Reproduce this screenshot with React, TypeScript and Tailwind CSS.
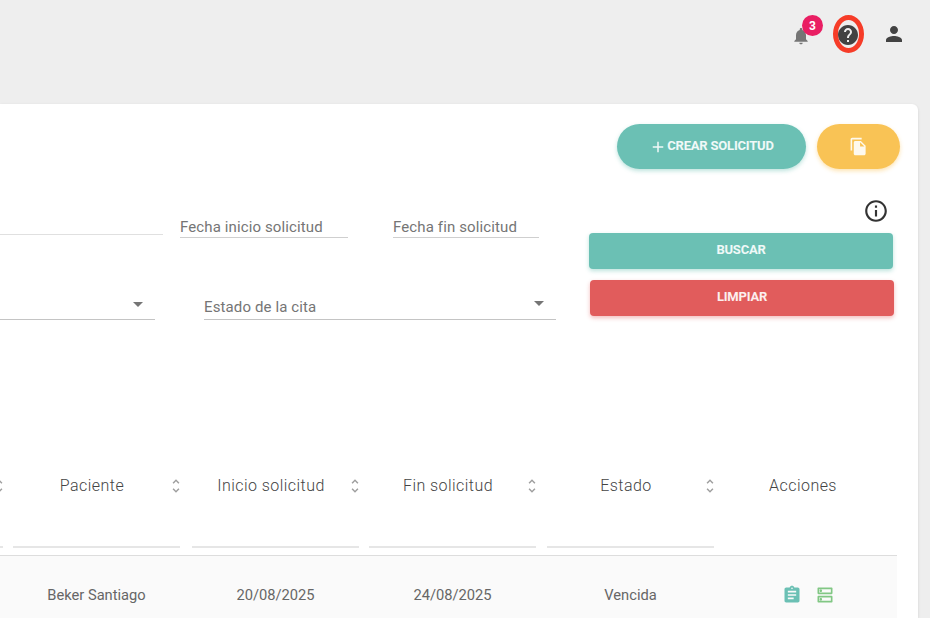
const ICONS = {
  bell: "M12 22c1.1 0 2-.9 2-2h-4c0 1.1.89 2 2 2zm6-6v-5c0-3.07-1.64-5.64-4.5-6.32V4c0-.83-.67-1.5-1.5-1.5s-1.5.67-1.5 1.5v.68C7.63 5.36 6 7.92 6 11v5l-2 2v1h16v-1l-2-2z",
  help: "M12 2C6.48 2 2 6.48 2 12s4.48 10 10 10 10-4.48 10-10S17.52 2 12 2zm1 17h-2v-2h2v2zm2.07-7.75l-.9.92C13.45 12.9 13 13.5 13 15h-2v-.5c0-1.1.45-2.1 1.17-2.83l1.24-1.26c.37-.36.59-.86.59-1.41 0-1.1-.9-2-2-2s-2 .9-2 2H8c0-2.21 1.79-4 4-4s4 1.79 4 4c0 .88-.36 1.68-.93 2.25z",
  person: "M12 12c2.21 0 4-1.79 4-4s-1.79-4-4-4-4 1.79-4 4 1.79 4 4 4zm0 2c-2.67 0-8 1.34-8 4v2h16v-2c0-2.66-5.33-4-8-4z",
  copy: "M16 1H4c-1.1 0-2 .9-2 2v14h2V3h12V1zm-1 4l6 6v10c0 1.1-.9 2-2 2H7.99C6.89 23 6 22.1 6 21l.01-14c0-1.1.89-2 1.99-2h7zm-1 7h5.5L14 6.5V12z",
  plus: "M19 13h-6v6h-2v-6H5v-2h6V5h2v6h6v2z",
  info: "M11 7h2v2h-2zm0 4h2v6h-2zm1-9C6.48 2 2 6.48 2 12s4.48 10 10 10 10-4.48 10-10S17.52 2 12 2zm0 18c-4.41 0-8-3.59-8-8s3.59-8 8-8 8 3.59 8 8-3.59 8-8 8z",
  sort: "M12 5.83L15.17 9l1.41-1.41L12 3 7.41 7.59 8.83 9 12 5.83zm0 12.34L8.83 15l-1.41 1.41L12 21l4.59-4.59L15.17 15 12 18.17z",
  assignment: "M19 3h-4.18C14.4 1.84 13.3 1 12 1c-1.3 0-2.4.84-2.82 2H5c-1.1 0-2 .9-2 2v14c0 1.1.9 2 2 2h14c1.1 0 2-.9 2-2V5c0-1.1-.9-2-2-2zm-7 0c.55 0 1 .45 1 1s-.45 1-1 1-1-.45-1-1 .45-1 1-1zm2 14H7v-2h7v2zm3-4H7v-2h10v2zm0-4H7V7h10v2z",
  storage: "M19 15v4H5v-4h14m1-2H4c-.55 0-1 .45-1 1v6c0 .55.45 1 1 1h16c.55 0 1-.45 1-1v-6c0-.55-.45-1-1-1zM7 18.5c-.82 0-1.5-.67-1.5-1.5s.68-1.5 1.5-1.5 1.5.67 1.5 1.5-.67 1.5-1.5 1.5zM19 5v4H5V5h14m1-2H4c-.55 0-1 .45-1 1v6c0 .55.45 1 1 1h16c.55 0 1-.45 1-1V4c0-.55-.45-1-1-1zM7 8.5c-.82 0-1.5-.67-1.5-1.5S6.18 5.5 7 5.5s1.5.68 1.5 1.5S7.83 8.5 7 8.5z",
};

function Icon({ d, className }: { d: string; className?: string }) {
  return (
    <svg viewBox="0 0 24 24" fill="currentColor" className={className}>
      <path d={d} />
    </svg>
  );
}

function Caret({ className }: { className?: string }) {
  return <div className={`w-0 h-0 border-x-[5px] border-x-transparent border-t-[5px] border-t-[#757575] ${className ?? ""}`} />;
}

function TopBar() {
  return (
    <div className="flex justify-end h-[104px] pt-[23px] pr-[24px]">
      <div className="relative w-[24px] h-[24px]">
        <Icon d={ICONS.bell} className="w-[20px] h-[20px] ml-[2px] mt-[3px] text-[#757575]" />
        <span className="absolute left-[13px] -top-[8px] w-[21px] h-[21px] rounded-full bg-[#e91e63] text-white text-[12px] font-bold flex items-center justify-center">
          3
        </span>
      </div>
      <div className="relative w-[24px] h-[24px] ml-[23px]">
        <Icon d={ICONS.help} className="w-[24px] h-[24px] text-[#424242]" />
        <div className="absolute -left-[3px] -top-[8px] w-[31px] h-[38px] rounded-[50%] border-[5px] border-[#f63c28]" />
      </div>
      <Icon d={ICONS.person} className="w-[24px] h-[24px] ml-[22px] -mt-[1px] text-[#424242]" />
    </div>
  );
}

function FilterBlock() {
  return (
    <div className="flex mt-[30px]">
      <div className="w-[556px] shrink-0 text-[15px] tracking-[0.12px] text-[#757575]">
        <div className="flex items-start h-[40px]">
          <div className="w-[163px] h-[36px] border-b border-[#e0e0e0]" />
          <div className="w-[168px] ml-[17px] mt-[18px] h-[21px] leading-[20px] border-b border-[#cfcfcf]">Fecha inicio solicitud</div>
          <div className="w-[146px] ml-[45px] mt-[18px] h-[21px] leading-[20px] border-b border-[#cfcfcf]">Fecha fin solicitud</div>
        </div>
        <div className="flex mt-[59px]">
          <div className="w-[155px] h-[22px] border-b border-[#c4c4c4] flex justify-end pr-[12px] pt-[4px]">
            <Caret />
          </div>
          <div className="w-[352px] ml-[49px] h-[22px] border-b border-[#c4c4c4] flex justify-between pr-[12px] leading-[18px]">
            <span>Estado de la cita</span>
            <Caret className="mt-[3px]" />
          </div>
        </div>
      </div>
      <div className="w-[305px] ml-[33px] shrink-0">
        <div className="flex justify-end pr-[5px] h-[34px]">
          <Icon d={ICONS.info} className="w-[26px] h-[26px] -mt-[1px] text-[#333333]" />
        </div>
        <button className="w-[304px] h-[36px] pb-[2px] rounded-[4px] bg-[#6bc0b4] text-white/90 text-[13px] font-bold tracking-[-0.2px] shadow-[0_2px_4px_rgba(108,193,180,0.45)]">
          BUSCAR
        </button>
        <button className="w-[304px] h-[36px] pb-[2px] ml-[1px] mt-[11px] block rounded-[4px] bg-[#e15c5c] text-white/90 text-[13px] font-bold tracking-[-0.2px] shadow-[0_2px_4px_rgba(225,91,91,0.4)]">
          LIMPIAR
        </button>
      </div>
    </div>
  );
}

function HeaderCell({ label, ml }: { label: string; ml: string }) {
  return (
    <div className={`w-[167px] shrink-0 flex items-center pl-[4px] ${ml}`}>
      <span className="flex-1 text-center">{label}</span>
      <Icon d={ICONS.sort} className="w-[18px] h-[18px] -mr-[5px] shrink-0 text-[#9e9e9e]" />
    </div>
  );
}

function FilterLine({ ml }: { ml: string }) {
  return <div className={`w-[167px] shrink-0 h-[46px] border-b-2 border-[#e6e6e6] ${ml}`} />;
}

function DataCell({ text, ml }: { text: string; ml: string }) {
  return <div className={`w-[167px] shrink-0 text-center ${ml}`}>{text}</div>;
}

function Table() {
  return (
    <div className="w-[897px] mt-[150px]">
      <div className="flex h-[32px] items-center text-[16px] font-light tracking-[0.45px] text-[#444444]">
        <div className="w-[3px] overflow-hidden flex justify-end">
          <Icon d={ICONS.sort} className="w-[18px] h-[18px] -mr-[5px] shrink-0 text-[#9e9e9e]" />
        </div>
        <HeaderCell label="Paciente" ml="ml-[10px]" />
        <HeaderCell label="Inicio solicitud" ml="ml-[12px]" />
        <HeaderCell label="Fin solicitud" ml="ml-[10px]" />
        <HeaderCell label="Estado" ml="ml-[11px]" />
        <div className="w-[156px] ml-[11px] text-center">Acciones</div>
      </div>
      <div className="flex border-b border-[#dddddd] pb-[7px]">
        <div className="w-[3px] h-[46px] border-b-2 border-[#e6e6e6]" />
        <FilterLine ml="ml-[10px]" />
        <FilterLine ml="ml-[12px]" />
        <FilterLine ml="ml-[10px]" />
        <FilterLine ml="ml-[11px]" />
      </div>
      <div className="flex items-center h-[78px] bg-[#fafafa] text-[14.7px] text-[#666666]">
        <div className="w-[3px]" />
        <DataCell text="Beker Santiago" ml="ml-[10px]" />
        <DataCell text="20/08/2025" ml="ml-[12px]" />
        <DataCell text="24/08/2025" ml="ml-[10px]" />
        <DataCell text="Vencida" ml="ml-[11px]" />
        <div className="flex ml-[68px]">
          <Icon d={ICONS.assignment} className="w-[20px] h-[20px] text-[#6bc0b4]" />
          <Icon d={ICONS.storage} className="w-[20px] h-[20px] ml-[13px] text-[#81c784]" />
        </div>
      </div>
    </div>
  );
}

export default function App() {
  return (
    <div className="w-[930px] h-[618px] overflow-hidden bg-[#eeeeee] font-['Roboto',sans-serif]">
      <TopBar />
      <div className="w-[918px] h-[514px] bg-white rounded-tr-[6px] shadow-[0_1px_3px_rgba(0,0,0,0.12)] overflow-hidden">
        <div className="flex justify-end gap-[11px] pt-[20px] pr-[18px]">
          <button className="w-[189px] h-[45px] pb-[2px] rounded-full bg-[#6bc0b4] text-white/90 text-[13px] font-bold tracking-[-0.2px] flex items-center justify-center shadow-[0_2px_4px_rgba(108,193,180,0.45)]">
            <Icon d={ICONS.plus} className="w-[18px] h-[18px] mt-[2px]" />
            CREAR SOLICITUD
          </button>
          <button className="w-[83px] h-[45px] rounded-full bg-[#f9c355] text-white/90 flex items-center justify-center shadow-[0_2px_4px_rgba(251,194,82,0.45)]">
            <Icon d={ICONS.copy} className="w-[19px] h-[19px]" />
          </button>
        </div>
        <FilterBlock />
        <Table />
      </div>
    </div>
  );
}
